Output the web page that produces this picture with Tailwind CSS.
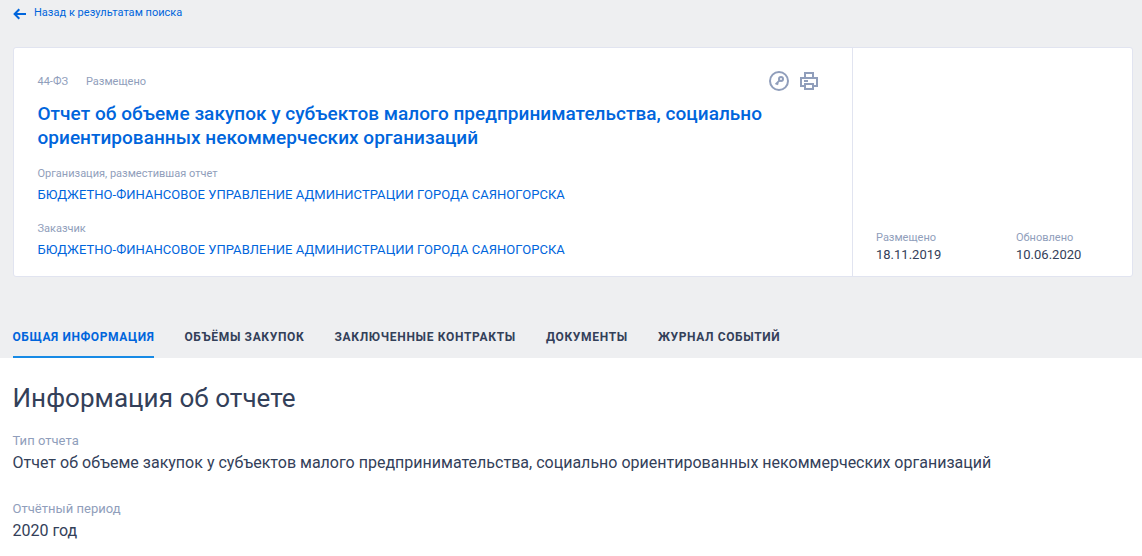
<!DOCTYPE html>
<html lang="ru">
<head>
  <meta charset="UTF-8" />
  <meta name="viewport" content="width=device-width, initial-scale=1.0" />
  <title>Информация об отчете</title>
  <script src="https://cdn.jsdelivr.net/npm/@tailwindcss/browser@4"></script>
</head>
<body class="bg-white font-['Roboto',sans-serif] text-[#334059] overflow-hidden">

  <!-- ========== HEADER ========== -->
  <header class="bg-[#eeeff1] h-[358px] pl-[12.5px] pr-[9px] flex flex-col">
    <a href="#" class="flex items-center h-[25px] mb-[22px] text-[11px] tracking-[0.02px] text-[#0065dc]">
      <svg class="w-[13px] h-[12px] mr-[8.5px] mt-[3px]" viewBox="0 0 13 12" fill="none" stroke="currentColor" stroke-width="2">
        <path d="M6.3 1.2L1.6 6L6.3 10.8M1.6 6H13" />
      </svg>
      <span class="mt-px">Назад к результатам поиска</span>
    </a>

    <!-- Card -->
    <section class="flex h-[230px] bg-white border border-[#e1e4f0] rounded-[3px]">
      <div class="w-[839.5px] shrink-0 pl-6 pr-[34px] pt-[23px] border-r border-[#e1e4f0]">
        <div class="flex justify-between h-[22px]">
          <div class="flex gap-[18px] text-[11px] leading-[22px] text-[#909ebb]">
            <span>44-ФЗ</span>
            <span>Размещено</span>
          </div>
          <div class="flex gap-[11px] text-[#909ebb]">
            <svg class="w-5 h-5" viewBox="0 0 20 20" fill="none" stroke="currentColor" stroke-width="2">
              <circle cx="10" cy="10" r="9" />
              <circle cx="12" cy="8" r="2" />
              <path d="M10.5 9.5L6.6 13.4M7.6 12L9.2 13.5" stroke-width="1.8" />
            </svg>
            <svg class="w-[18px] h-[18px] mt-px" viewBox="0 0 18 18" fill="none" stroke="currentColor" stroke-width="2">
              <path d="M5 6V1H13V6M5 14H1V6H17V14H13M5 12H13V17H5ZM4 9H8" />
            </svg>
          </div>
        </div>
        <h1 class="mt-[9px] text-[19px] leading-6 font-medium tracking-[0.03px] text-[#0065dc] whitespace-nowrap">
          Отчет об объеме закупок у субъектов малого предпринимательства, социально<br />ориентированных некоммерческих организаций
        </h1>
        <p class="mt-4 text-[11px] leading-4 text-[#909ebb]">Организация, разместившая отчет</p>
        <a href="#" class="block mt-[3px] text-[13px] leading-5 tracking-[0.045px] text-[#0065dc]">БЮДЖЕТНО-ФИНАНСОВОЕ УПРАВЛЕНИЕ АДМИНИСТРАЦИИ ГОРОДА САЯНОГОРСКА</a>
        <p class="mt-4 text-[11px] leading-4 text-[#909ebb]">Заказчик</p>
        <a href="#" class="block mt-[3px] text-[13px] leading-5 tracking-[0.045px] text-[#0065dc]">БЮДЖЕТНО-ФИНАНСОВОЕ УПРАВЛЕНИЕ АДМИНИСТРАЦИИ ГОРОДА САЯНОГОРСКА</a>
      </div>
      <div class="flex-1 flex items-end pl-[23px] pb-3">
        <div class="w-[140px]">
          <p class="text-[11px] leading-4 text-[#909ebb]">Размещено</p>
          <p class="text-[13px] leading-[18px]">18.11.2019</p>
        </div>
        <div>
          <p class="text-[11px] leading-4 text-[#909ebb]">Обновлено</p>
          <p class="text-[13px] leading-[18px]">10.06.2020</p>
        </div>
      </div>
    </section>

    <!-- Tabs -->
    <nav class="mt-auto flex gap-[30px] text-[12px] leading-4 font-bold tracking-[0.6px] whitespace-nowrap">
      <a href="#" class="pb-[11px] text-[#0065dc] border-b-2 border-[#178ae5]">ОБЩАЯ ИНФОРМАЦИЯ</a>
      <a href="#" class="tracking-[0.64px]">ОБЪЁМЫ ЗАКУПОК</a>
      <a href="#" class="tracking-[0.68px]">ЗАКЛЮЧЕННЫЕ КОНТРАКТЫ</a>
      <a href="#" class="tracking-[0.68px]">ДОКУМЕНТЫ</a>
      <a href="#" class="tracking-[0.62px]">ЖУРНАЛ СОБЫТИЙ</a>
    </nav>
  </header>

  <!-- ========== REPORT INFO ========== -->
  <main class="pl-[12.5px] pt-6">
    <h2 class="text-[26px] leading-8 tracking-[0.05px]">Информация об отчете</h2>
    <p class="mt-[17px] text-[13px] leading-[20px] tracking-[0.03px] text-[#909ebb]">Тип отчета</p>
    <p class="text-[16px] leading-6 tracking-[0.01px]">Отчет об объеме закупок у субъектов малого предпринимательства, социально ориентированных некоммерческих организаций</p>
    <p class="mt-6 text-[13px] leading-[20px] tracking-[0.03px] text-[#909ebb]">Отчётный период</p>
    <p class="text-[16px] leading-6">2020 год</p>
  </main>

</body>
</html>
